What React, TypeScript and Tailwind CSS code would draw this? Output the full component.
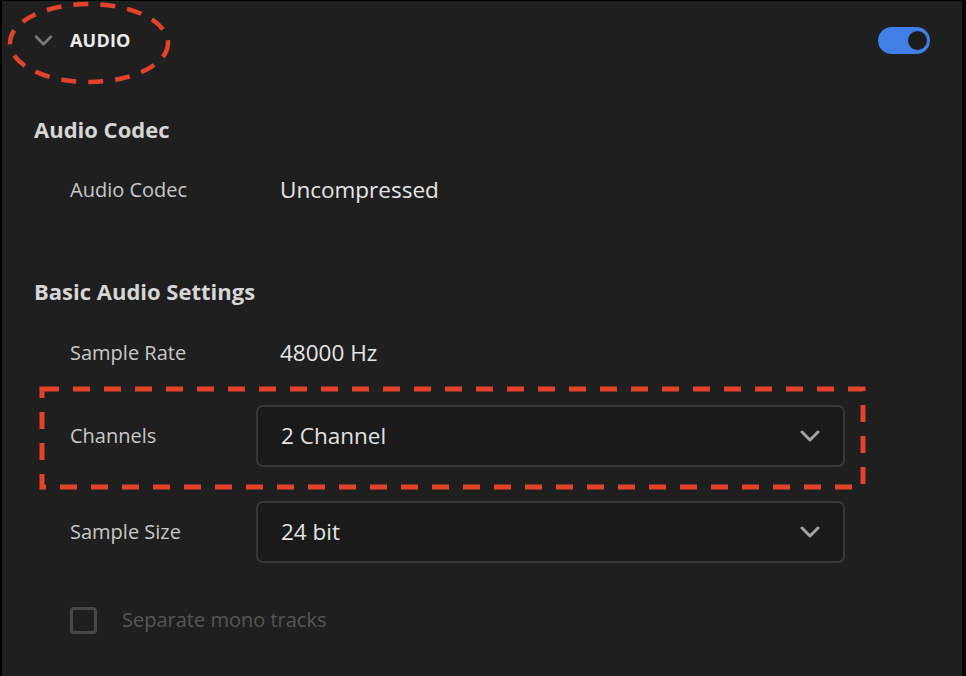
import { ReactNode } from 'react'

const font = { fontFamily: '"Open Sans", "Noto Sans", sans-serif' }

function Chevron({ className }: { className?: string }) {
  return (
    <svg viewBox="0 0 20 12" className={className} fill="none" stroke="currentColor" strokeWidth={3} strokeLinecap="round" strokeLinejoin="round">
      <path d="M2 2l8 8 8-8" />
    </svg>
  )
}

function Row({ label, children, className }: { label: string; children: ReactNode; className: string }) {
  return (
    <div className={`flex items-center pl-[68px] ${className}`}>
      <div className="w-[186px] text-[20px] text-[#c8c8c8]">{label}</div>
      {children}
    </div>
  )
}

function Select({ value }: { value: string }) {
  return (
    <div className="flex h-full w-[589px] items-center justify-between rounded-[7px] border-2 border-[#383838] bg-[#1a1a1a] pl-[23px] pr-[23px]">
      <span className="text-[22.5px] text-[#e2e2e2]">{value}</span>
      <Chevron className="h-[12px] w-[20px] text-[#a3a3a3]" />
    </div>
  )
}

export default function App() {
  return (
    <div className="h-[676px] w-[966px] bg-black pl-[2px] pr-[4px] pt-px" style={font}>
      <div className="relative h-[675px] bg-[#1f1f1f]">
        <div className="flex h-[79px] items-center justify-between pl-[32px] pr-[32px]">
          <div className="flex items-center gap-[17px]">
            <Chevron className="h-[11px] w-[19px] text-[#787878]" />
            <span className="text-[18px] font-bold tracking-[0.01em] text-[#ececec]">AUDIO</span>
          </div>
          <div className="relative h-[27px] w-[52px] rounded-full bg-[#3f7fe6]">
            <div className="absolute right-[1px] top-[2px] h-[23px] w-[23px] rounded-full border-[2px] border-[#3f7fe6] bg-[#1c1c1c]" />
          </div>
        </div>

        <div className="mt-[24px] flex h-[50px] items-center pl-[32px] text-[22px] font-bold text-[#d6d6d6]">Audio Codec</div>
        <Row label="Audio Codec" className="mt-[11px] h-[50px]">
          <span className="pl-[24px] text-[22.5px] text-[#e6e6e6]">Uncompressed</span>
        </Row>

        <div className="mt-[51px] flex h-[50px] items-center pl-[32px] text-[22px] font-bold text-[#d6d6d6]">Basic Audio Settings</div>
        <Row label="Sample Rate" className="mt-[12px] h-[50px]">
          <span className="pl-[24px] text-[22.5px] text-[#e6e6e6]">48000 Hz</span>
        </Row>
        <Row label="Channels" className="mt-[27px] h-[62px]">
          <Select value="2 Channel" />
        </Row>
        <Row label="Sample Size" className="mt-[34px] h-[62px]">
          <Select value="24 bit" />
        </Row>

        <div className="mt-[32px] flex h-[50px] items-center pl-[68px]">
          <div className="h-[27px] w-[27px] rounded-[4px] border-[3px] border-[#474747]" />
          <span className="pl-[25px] text-[20px] text-[#565656]">Separate mono tracks</span>
        </div>

        <svg className="pointer-events-none absolute left-0 top-0" width="960" height="675" fill="none" stroke="#e4432b">
          <ellipse cx="87" cy="42" rx="79" ry="39" strokeWidth={4.5} strokeDasharray="15 12" />
          <rect x="40" y="388" width="821" height="98" strokeWidth={5} strokeDasharray="17 14" />
        </svg>
      </div>
    </div>
  )
}
